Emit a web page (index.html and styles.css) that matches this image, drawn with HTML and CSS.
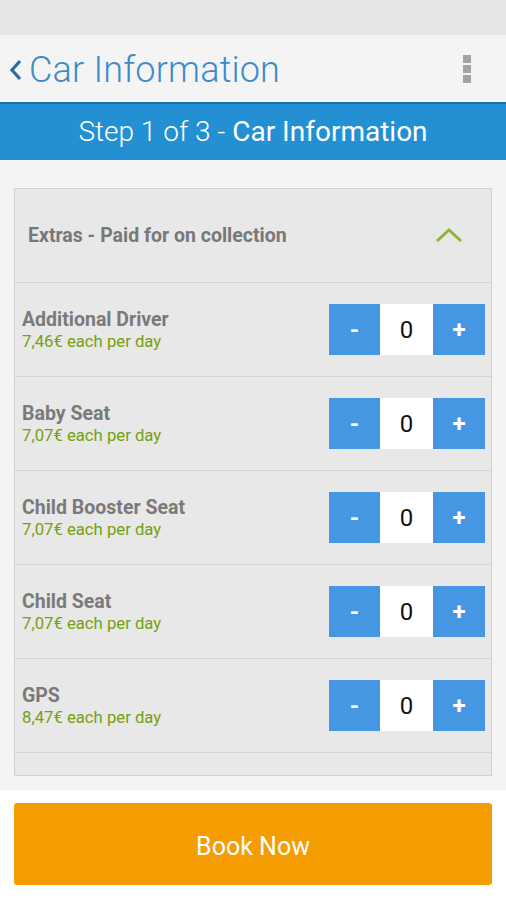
FILE: index.html
```html
<!DOCTYPE html>
<html>
<head>
<meta charset="utf-8">
<link rel="stylesheet" href="styles.css">
</head>
<body>
<div class="status"></div>
<header class="appbar">
  <div class="back">
    <svg width="14" height="22" viewBox="0 0 14 22"><path d="M11 2 L3 11 L11 20" fill="none" stroke="#2a6ba3" stroke-width="3.2"/></svg>
    <span class="title">Car Information</span>
  </div>
  <div class="menu"><i></i><i></i><i></i></div>
</header>
<div class="stepbar"><span class="light">Step 1 of 3 - </span><span class="reg">Car Information</span></div>
<main class="content">
  <section class="card">
    <div class="card-head">
      <span>Extras - Paid for on collection</span>
      <svg width="30" height="16" viewBox="0 0 30 16"><path d="M3 14 L15 3 L27 14" fill="none" stroke="#8db33a" stroke-width="3"/></svg>
    </div>
    <div class="row">
      <div class="info"><div class="name">Additional Driver</div><div class="price">7,46€ each per day</div></div>
      <div class="stepper"><button class="btn">-</button><span class="val">0</span><button class="btn plus">+</button></div>
    </div>
    <div class="row">
      <div class="info"><div class="name">Baby Seat</div><div class="price">7,07€ each per day</div></div>
      <div class="stepper"><button class="btn">-</button><span class="val">0</span><button class="btn plus">+</button></div>
    </div>
    <div class="row">
      <div class="info"><div class="name">Child Booster Seat</div><div class="price">7,07€ each per day</div></div>
      <div class="stepper"><button class="btn">-</button><span class="val">0</span><button class="btn plus">+</button></div>
    </div>
    <div class="row">
      <div class="info"><div class="name">Child Seat</div><div class="price">7,07€ each per day</div></div>
      <div class="stepper"><button class="btn">-</button><span class="val">0</span><button class="btn plus">+</button></div>
    </div>
    <div class="row">
      <div class="info"><div class="name">GPS</div><div class="price">8,47€ each per day</div></div>
      <div class="stepper"><button class="btn">-</button><span class="val">0</span><button class="btn plus">+</button></div>
    </div>
    <div class="row-partial"></div>
  </section>
</main>
<footer class="footer"><button class="book">Book Now</button></footer>
</body>
</html>
```
FILE: styles.css
```css
* { box-sizing: border-box; }
html, body { margin: 0; padding: 0; }
body {
  width: 506px;
  height: 900px;
  overflow: hidden;
  font-family: Roboto, "Noto Sans", sans-serif;
  background: #f4f4f4;
}
.status { height: 35px; background: #e6e6e6; }
.appbar {
  height: 67px;
  background: #f4f4f4;
  display: flex;
  align-items: center;
  justify-content: space-between;
  padding: 3px 35px 0 9px;
}
.back { display: flex; align-items: center; gap: 6px; }
.title {
  font-weight: 300;
  font-size: 36px;
  color: #3b8ccb;
  letter-spacing: 0.2px;
}
.menu { display: flex; flex-direction: column; gap: 2px; margin-top: -2px; }
.menu i { display: block; width: 8px; height: 8px; background: #a3a3a3; }
.stepbar {
  height: 58px;
  background: #2390d4;
  border-top: 2px solid #1a6fa6;
  color: #fff;
  font-size: 28px;
  display: flex;
  align-items: center;
  justify-content: center;
  padding-bottom: 2px;
}
.stepbar .light { font-weight: 300; white-space: pre; }
.stepbar .reg { font-weight: 400; }
.content {
  height: 630px;
  padding: 28px 14px 0;
  background: #f4f4f4;
}
.card {
  border: 1px solid #d2d2d2;
  background: #e8e8e8;
  height: 588px;
  overflow: hidden;
}
.card-head {
  height: 94px;
  display: flex;
  align-items: center;
  justify-content: space-between;
  padding: 0 27px 0 13px;
  font-weight: 700;
  font-size: 19.5px;
  color: #787878;
  border-bottom: 1px solid #d4d4d4;
}
.card-head svg { margin-bottom: 2px; }
.row {
  height: 94px;
  display: flex;
  align-items: center;
  justify-content: space-between;
  padding: 0 6px 0 7px;
  border-bottom: 1px solid #d4d4d4;
}
.info { margin-top: 1px; }
.name { font-weight: 700; font-size: 19.5px; color: #7a7a7a; line-height: 22px; }
.price { font-size: 16.7px; color: #74a012; line-height: 21px; }
.stepper { display: flex; height: 51px; }
.btn {
  width: 51px;
  height: 51px;
  border: 0;
  padding: 0;
  background: #4596e3;
  color: #fff;
  font-family: Roboto, sans-serif;
  font-weight: 700;
  font-size: 24px;
}
.btn.plus { width: 52px; }
.val {
  width: 53px;
  background: #fff;
  display: flex;
  align-items: center;
  justify-content: center;
  font-size: 24px;
  color: #111;
}
.footer {
  height: 110px;
  background: #fff;
  padding: 13px 14px 0;
}
.book {
  width: 478px;
  height: 82px;
  border: 0;
  border-radius: 3px;
  background: #f59c00;
  color: #fff;
  font-family: Roboto, sans-serif;
  font-size: 25px;
  font-weight: 400;
  padding-top: 5px;
}
```
